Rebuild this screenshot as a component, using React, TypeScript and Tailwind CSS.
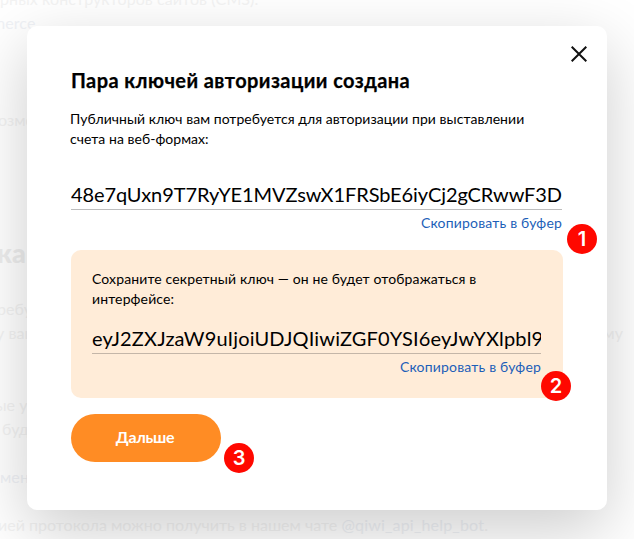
import type { ReactNode } from "react";

function Badge({ children, className }: { children: ReactNode; className: string }) {
  return (
    <span
      className={`absolute flex size-[30px] items-center justify-center rounded-full bg-[#ff0800] font-['Inter'] text-[20px] leading-none font-semibold text-white ${className}`}
    >
      {children}
    </span>
  );
}

function KeyField({ value, className }: { value: string; className: string }) {
  return (
    <div>
      <div className={`h-7 overflow-hidden border-b text-[20px] leading-[25px] whitespace-nowrap ${className}`}>
        {value}
      </div>
      <div className="mt-[3px] flex justify-end">
        <button className="text-[14px] leading-5 tracking-[0.18px] whitespace-nowrap text-[#1d5fb8]">
          Скопировать в буфер
        </button>
      </div>
    </div>
  );
}

function PageBehind() {
  return (
    <div className="h-full overflow-hidden text-[16px] leading-6 tracking-[0.08px] whitespace-nowrap text-[#f3f3f3]">
      <p className="-mt-[13px]">рных конструкторов сайтов (CMS).</p>
      <p className="-ml-[8px] text-[#f0f2f6]">merce</p>
      <p className="mt-[73px] -ml-[2px]">озмо</p>
      <h2 className="mt-[105px] -ml-[3px] text-[27px] leading-8 font-black text-[#eeeeee]">ка</h2>
      <p className="mt-7 -ml-[3px]">ребу</p>
      <div className="-ml-[4px] flex w-[627px] justify-between">
        <span>у ваш</span>
        <span>му</span>
      </div>
      <p className="mt-12 -ml-[5px]">ые ув</p>
      <p className="ml-[2px]">буд</p>
      <p className="mt-6 text-[#f0f2f6]">мен</p>
      <p className="mt-6 -ml-[2px] tracking-[0.02px]">
        ией протокола можно получить в нашем чате{" "}
        <span className="tracking-[0.2px] text-[#f0f2f6]">@qiwi_api_help_bot</span>.
      </p>
    </div>
  );
}

export default function App() {
  return (
    <main className="relative h-[539px] w-[634px] overflow-hidden bg-white font-['Lato',sans-serif] text-black">
      <PageBehind />
      <section className="absolute top-[26px] left-[27px] h-[484px] w-[580px] rounded-[10px] bg-white px-11 pt-[41px] shadow-[0_20px_64px_rgba(0,0,0,0.2)]">
        <button aria-label="Закрыть" className="absolute top-5 right-5">
          <svg width="16" height="16" viewBox="0 0 16 16" fill="none" stroke="#111" strokeWidth="2">
            <path d="M0.7 0.7 15.3 15.3M15.3 0.7 0.7 15.3" />
          </svg>
        </button>
        <h1 className="text-[20px] leading-[26px] font-bold tracking-[0.42px] whitespace-nowrap [-webkit-text-stroke:0.25px_black]">
          Пара ключей авторизации создана
        </h1>
        <p className="mt-4 mb-[33px] -ml-px text-[14px] leading-5 tracking-[0.04px] whitespace-nowrap">
          Публичный ключ вам потребуется для авторизации при выставлении
          <br />
          счета на веб-формах:
        </p>
        <div className="w-[491px]">
          <KeyField value="48e7qUxn9T7RyYE1MVZswX1FRSbE6iyCj2gCRwwF3D" className="border-[#bdbdbd] tracking-[-0.09px]" />
        </div>
        <div className="mt-[17px] h-[148px] w-[492px] rounded-[10px] bg-[#ffecd8] pt-[19px] pr-[22px] pl-[21px]">
          <p className="mb-[17px] text-[14px] leading-5 tracking-[0.13px] whitespace-nowrap">
            Сохраните секретный ключ — он не будет отображаться в
            <br />
            интерфейсе:
          </p>
          <KeyField value="eyJ2ZXJzaW9uIjoiUDJQIiwiZGF0YSI6eyJwYXlpbl9" className="border-[#c4b6a8] tracking-[0.16px]" />
        </div>
        <button className="mt-4 h-12 w-[150px] rounded-full bg-[#ff8c24] pr-[2px] pb-[2px] text-[16px] font-bold tracking-[-0.3px] text-white">
          Дальше
        </button>
        <Badge className="top-[198px] left-[540px]">1</Badge>
        <Badge className="top-[345px] left-[514px]">2</Badge>
        <Badge className="top-[417px] left-[197px]">3</Badge>
      </section>
    </main>
  );
}
